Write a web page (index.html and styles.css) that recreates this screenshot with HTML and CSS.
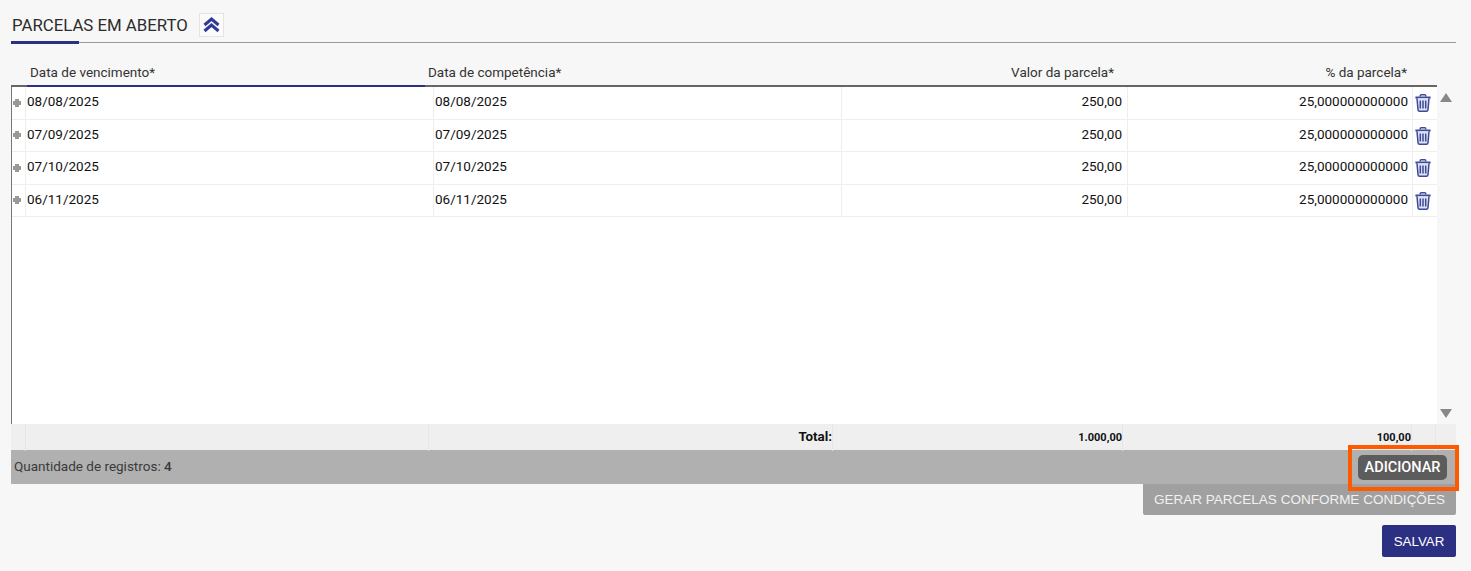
FILE: index.html
```html
<!DOCTYPE html>
<html lang="pt-BR">
<head>
<meta charset="utf-8">
<title>Parcelas em aberto</title>
<link rel="stylesheet" href="styles.css">
</head>
<body>
<main class="page">
  <section class="section-head">
    <h2 class="section-title">PARCELAS EM ABERTO</h2>
    <button class="collapse" type="button" aria-label="Recolher">
      <svg width="17" height="16" viewBox="0 0 17 16"><path d="M1.5 8 8.5 2l7 6M1.5 14l7-6 7 6" fill="none" stroke="#2f3a96" stroke-width="3"/></svg>
    </button>
  </section>

  <div class="grid-head">
    <div class="hcell h1">Data de vencimento*</div>
    <div class="hcell h2">Data de competência*</div>
    <div class="hcell h3">Valor da parcela*</div>
    <div class="hcell h4">% da parcela*</div>
  </div>

  <div class="grid-body">
    <div class="rows">
      <div class="row">
        <div class="cell exp"><span class="plus"></span></div><div class="cell">08/08/2025</div><div class="cell">08/08/2025</div><div class="cell num val">250,00</div><div class="cell num">25,000000000000</div>
        <div class="cell act"><svg class="trash" viewBox="0 0 16 18"><use href="#trash"/></svg></div>
      </div>
      <div class="row">
        <div class="cell exp"><span class="plus"></span></div><div class="cell">07/09/2025</div><div class="cell">07/09/2025</div><div class="cell num val">250,00</div><div class="cell num">25,000000000000</div>
        <div class="cell act"><svg class="trash" viewBox="0 0 16 18"><use href="#trash"/></svg></div>
      </div>
      <div class="row">
        <div class="cell exp"><span class="plus"></span></div><div class="cell">07/10/2025</div><div class="cell">07/10/2025</div><div class="cell num val">250,00</div><div class="cell num">25,000000000000</div>
        <div class="cell act"><svg class="trash" viewBox="0 0 16 18"><use href="#trash"/></svg></div>
      </div>
      <div class="row">
        <div class="cell exp"><span class="plus"></span></div><div class="cell">06/11/2025</div><div class="cell">06/11/2025</div><div class="cell num val">250,00</div><div class="cell num">25,000000000000</div>
        <div class="cell act"><svg class="trash" viewBox="0 0 16 18"><use href="#trash"/></svg></div>
      </div>
    </div>
    <div class="scroll">
      <span class="arrow up"></span>
      <span class="arrow down"></span>
    </div>
  </div>

  <div class="totals">
    <div class="tcell"></div>
    <div class="tcell"></div>
    <div class="tcell total-label">Total:</div>
    <div class="tcell tnum">1.000,00</div>
    <div class="tcell tnum">100,00</div>
    <div class="tcell"></div>
    <div class="tcell"></div>
  </div>

  <div class="count-bar">
    <span class="count">Quantidade de registros: <b>4</b></span>
    <button class="btn-add" type="button">ADICIONAR</button>
  </div>

  <div class="actions">
    <button class="btn-gen" type="button">GERAR PARCELAS CONFORME CONDIÇÕES</button>
    <button class="btn-save" type="button">SALVAR</button>
  </div>
</main>

<svg class="defs" width="0" height="0" aria-hidden="true">
  <symbol id="trash" viewBox="0 0 16 18">
    <path d="M5.2 2.6V1.8q0-1 1-1h3.6q1 0 1 1v.8" fill="none" stroke="#3d4a9c" stroke-width="1.4"/>
    <path d="M.4 3.5h15.2" stroke="#3d4a9c" stroke-width="2" fill="none"/>
    <path d="M2 4.2 3 15.6q.1 1.7 1.8 1.7h6.4q1.7 0 1.8-1.7L14 4.2" fill="#dfe2f1" stroke="#3d4a9c" stroke-width="1.5"/>
    <path d="M5.3 6.4v8.2M8 6.4v8.2M10.7 6.4v8.2" stroke="#3d4a9c" stroke-width="1.5" fill="none"/>
  </symbol>
</svg>
</body>
</html>
```
FILE: styles.css
```css
* { box-sizing: border-box; }
html, body { margin: 0; height: 100%; }
body {
  background: #f7f7f7;
  font-family: Roboto, "Liberation Sans", sans-serif;
  font-size: 13.5px;
  color: #111;
  overflow: hidden;
}
.defs { display: block; height: 0; }
button { cursor: pointer; }
.page { padding: 0 15px 0 11px; }

.section-head {
  height: 43px;
  display: flex;
  align-items: flex-start;
  gap: 11px;
  padding-top: 13px;
  border-bottom: 1px solid #999;
  position: relative;
}
.section-head::after {
  content: "";
  position: absolute;
  left: 0;
  bottom: -2px;
  width: 68px;
  height: 3px;
  background: #2b3082;
}
.section-title {
  margin: 0;
  font-size: 16.8px;
  font-weight: 400;
  line-height: 24px;
  color: #2c2c2c;
  padding-left: 1px;
}
.collapse {
  width: 25px;
  height: 24px;
  padding: 0;
  display: flex;
  align-items: center;
  justify-content: center;
  background: #fbfbfb;
  border: 1px solid #e4e4e4;
}

.grid-head {
  margin-top: 16px;
  height: 28px;
  display: grid;
  grid-template-columns: 414px 398px 291px 293px;
  border-bottom: 2px solid #666;
  margin-right: 19px;
  position: relative;
  color: #333;
}
.grid-head::after {
  content: "";
  position: absolute;
  left: 16px;
  bottom: -2px;
  width: 398px;
  height: 2px;
  background: #2b3082;
}
.hcell { line-height: 27px; }
.h1 { padding-left: 19px; }
.h2 { padding-left: 3px; }
.h3, .h4 { text-align: right; }

.grid-body {
  height: 337px;
  display: flex;
}
.rows {
  width: 1426px;
  background: #fff;
  border-left: 1px solid #777;
}
.row {
  height: 32.5px;
  display: grid;
  grid-template-columns: 14px 408px 408px 286px 285px 24px;
  border-bottom: 1px solid #eee;
}
.cell {
  line-height: 29px;
  padding-left: 1px;
  border-right: 1px solid #eee;
  white-space: nowrap;
}
.num { text-align: right; padding: 0 4px 0 0; }
.val { padding-right: 5px; }
.exp { display: flex; align-items: center; padding: 0 0 0 1px; }
.plus {
  width: 8px;
  height: 8px;
  background:
    linear-gradient(#999, #999) center / 8px 4px no-repeat,
    linear-gradient(#999, #999) center / 4px 8px no-repeat;
  border-radius: 1px;
}
.act { display: flex; align-items: center; justify-content: flex-start; border-right: 0; padding: 0 0 0 2px; }
.trash { width: 16px; height: 18px; margin-top: 1px; }

.scroll {
  width: 19px;
  display: flex;
  flex-direction: column;
  justify-content: space-between;
  align-items: center;
  padding: 6px 1px 6px 0;
}
.arrow {
  width: 0;
  height: 0;
  border-left: 6.5px solid transparent;
  border-right: 6.5px solid transparent;
}
.up { border-bottom: 9px solid #888; }
.down { border-top: 9px solid #888; }

.totals {
  height: 26px;
  display: grid;
  grid-template-columns: 15px 403px 404px 290px 289px 24px 20px;
  background: #efefef;
  font-size: 11px;
  font-weight: 700;
  line-height: 27px;
}
.tcell {
  border-right: 1px solid #e6e6e6;
  text-align: right;
}
.tcell:last-child { border-right: 0; }
.total-label { font-size: 13.33px; line-height: 26px; }

.count-bar {
  height: 34px;
  background: #b0b0b0;
  display: flex;
  align-items: center;
  justify-content: space-between;
  padding: 0 9px 0 3px;
}
.count { color: #3a3a3a; line-height: 30px; margin-bottom: 2px; }
.count b { font-weight: 500; }
.btn-add {
  width: 89px;
  height: 25px;
  padding: 0;
  border: 0;
  border-radius: 5px;
  background: #5c5c5c;
  color: #fff;
  font-family: Roboto, sans-serif;
  font-size: 14.5px;
  font-weight: 500;
  position: relative;
}
.btn-add::after {
  content: "";
  position: absolute;
  left: -10px;
  right: -12px;
  top: -10px;
  bottom: -11px;
  border: 4px solid #ff5a00;
}

.actions {
  display: flex;
  flex-direction: column;
  align-items: flex-end;
  gap: 10px;
}
.btn-gen {
  width: 313px;
  height: 31px;
  padding: 0;
  border: 0;
  border-radius: 0 0 2px 2px;
  background: #a0a0a0;
  color: #f1f1f1;
  font-family: "Liberation Sans", Arial, sans-serif;
  font-size: 13.5px;
}
.btn-save {
  width: 74px;
  height: 32px;
  padding: 0;
  border: 0;
  border-radius: 2px;
  background: #2b3082;
  color: #fff;
  font-family: "Liberation Sans", Arial, sans-serif;
  font-size: 13.33px;
}
```
